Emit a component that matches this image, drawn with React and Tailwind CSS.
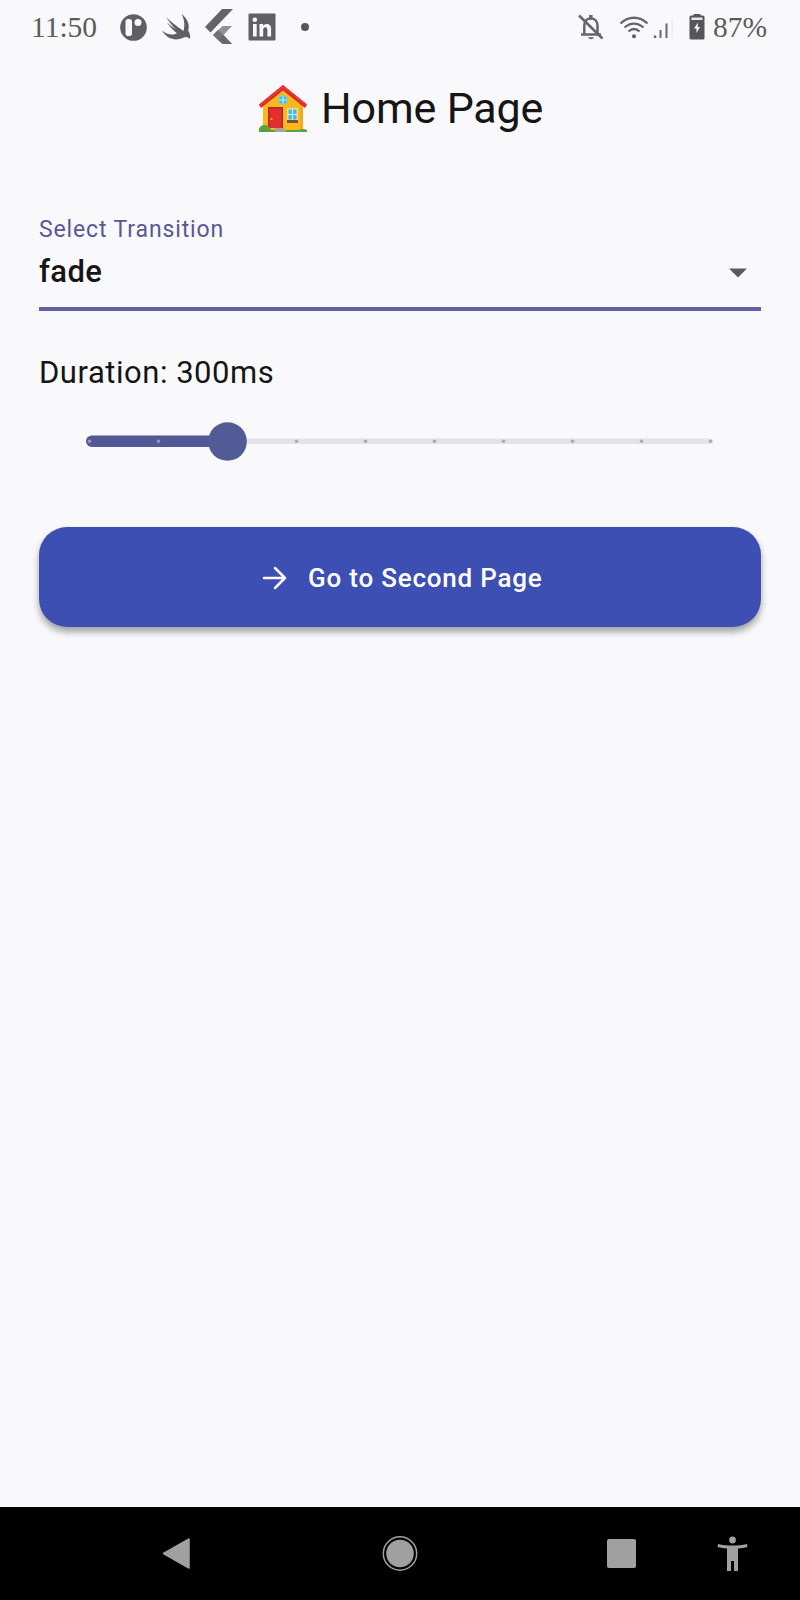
import React from "react";

function PatreonIcon() {
  return (
    <svg className="ml-[21px] h-[28px] w-[28px] shrink-0" viewBox="0 0 28 28">
      <circle cx="14.500" cy="14.500" r="13.300" fill="#606062" />
      <rect x="6.500" y="6" width="6.500" height="17" rx="2.800" fill="#f9f9fb" />
      <circle cx="19" cy="9.500" r="3.500" fill="#f9f9fb" />
    </svg>
  );
}

function SwiftIcon() {
  return (
    <svg className="ml-[14px] h-[28px] w-[32px] shrink-0" viewBox="0 0 32 28">
      <path
        fill="#606062"
        d="M20.500 1c5.500 4 8.700 10.500 6.700 16.500 2 3.500 2.500 6.500 1.500 8.500-2-2.500-4.500-2.300-7-1C14 28.500 5.500 25.500 1 17.500c5 4.500 11 5 15 2.800C11.500 17 8.500 13 6 9.500c3 2.500 6 5 9 7-4-4-7.500-8.500-10-12.500 4.500 4.500 11 9.500 17.500 14C24 12 23.500 6.500 20.500 1Z"
      />
    </svg>
  );
}

function FlutterIcon() {
  return (
    <svg className="ml-[11px] h-[36px] w-[30px] shrink-0" viewBox="0 0 30 36">
      <path d="M18 0h11L6.500 23.500 1 18Z" fill="#646466" />
      <path d="M18.500 17H28L19.500 26 28 35h-9.500L9 26Z" fill="#929294" />
      <path d="m9 26 5-5 5.500 5-5.500 5Z" fill="#737375" />
      <path d="m14 31 5.500-5L28 35h-9.500Z" fill="#69696b" />
    </svg>
  );
}

function LinkedInIcon() {
  return (
    <svg className="ml-[14px] h-[28px] w-[28px] shrink-0" viewBox="0 0 28 28">
      <rect x=".5" y=".5" width="27" height="27" rx="1" fill="#606062" />
      <circle cx="6.800" cy="6.800" r="2.300" fill="#f9f9fb" />
      <path
        fill="#f9f9fb"
        d="M5 11h3.700v12.500H5ZM11.500 11h3.600v1.800c1.800-2.800 8-3 8 3.200v7.500h-3.700v-6.800c0-3.300-4.200-3.300-4.200 0v6.800h-3.700Z"
      />
    </svg>
  );
}

function BellOffIcon() {
  return (
    <svg className="h-[28px] w-[26px] shrink-0" viewBox="0 0 26 28" fill="none" stroke="#666668" strokeWidth="2.500">
      <path d="M6.300 22V12.500C6.300 8 9 5.500 12.800 5.500s6.700 2.500 6.700 7V22M3 21.500h20" />
      <path d="M12.800 2v3" strokeWidth="3.500" />
      <path d="M10 24.300h6c-.5 2.500-5.500 2.500-6 0Z" fill="#666668" stroke="none" />
      <path d="M1 2.500 24.500 25.500" />
    </svg>
  );
}

function WifiIcon() {
  return (
    <svg className="ml-[15px] h-[24px] w-[32px] shrink-0" viewBox="0 0 32 24" fill="none" stroke="#666668" strokeWidth="2.300">
      <path d="M1.500 8.500C9.500 .8 20.500 .8 28.500 8.500M5.500 12.500c5.800-5.300 13.200-5.300 19 0M9.500 16.500c3.500-3.200 7.500-3.200 11 0" />
      <circle cx="15" cy="21.300" r="2" fill="#5b5b5d" stroke="none" />
    </svg>
  );
}

function SignalIcon() {
  return (
    <svg className="ml-[2px] h-[24px] w-[22px] shrink-0" viewBox="0 0 22 24">
      <path d="M.8 20.500h2.500V23H.8ZM6.500 15h2v8h-2ZM12.500 8.500h2V23h-2Z" fill="#6a6a6c" />
      <path d="M18.500 4h1.500v19h-1.500Z" fill="#ececef" />
    </svg>
  );
}

function BatteryIcon() {
  return (
    <svg className="ml-[14px] h-[26px] w-[16px] shrink-0" viewBox="0 0 16 26">
      <path d="M4.500 0h7v1.500H14A1.500 1.500 0 0 1 15.500 3v21A1.500 1.500 0 0 1 14 25.500H2A1.500 1.500 0 0 1 .5 24V3A1.500 1.500 0 0 1 2 1.500h2.500Z" fill="#565658" />
      <path d="M2.500 3.500h11V6h-11Z" fill="#e9e9ec" />
      <path d="M9 8.500 5 14.500h2.500V19L11 13H8.700Z" fill="#f9f9fb" />
    </svg>
  );
}

function HouseIcon() {
  return (
    <svg className="mt-[15px] h-[48px] w-[48px] shrink-0" viewBox="0 0 48 48">
      <path d="M4 20 24 3l20 17v26H4Z" fill="#f9b91c" />
      <path d="M36 14 44 20v26h-3V20Z" fill="#f4ab18" />
      <path d="M24 0 48 19.500 46 23 24 5.500 2 23 0 19.500Z" fill="#d92d2b" />
      <path d="M24 0 48 19.500 47 21 24 2.500 1 21 0 19.500Z" fill="#e63c33" />
      <circle cx="24" cy="15" r="5" fill="#8ccbb0" />
      <circle cx="24" cy="15" r="3.800" fill="#43bde8" />
      <path d="M24 11v8M20 15h8" stroke="#d7f1ee" strokeWidth="1" />
      <path d="M9 22h15v21H9Z" fill="#b9252b" />
      <path d="M10.500 23.500h12V43h-12Z" fill="#df302d" />
      <circle cx="12.500" cy="34" r="1" fill="#f8c52d" />
      <path d="M28 23h11v14H28Z" fill="#f5d98b" />
      <path d="M29.500 24.500h8v10h-8Z" fill="#43bde8" />
      <path d="M33.500 24v11M29 29.500h9" stroke="#d7f1ee" strokeWidth="1" />
      <path d="M28 35h11v3H28Z" fill="#805039" />
      <path d="M0 47v-3c1-4.500 8-6 11-1l1 2h28c3-1.500 6-1.500 8 0v2Z" fill="#5ca044" />
      <path d="M16 43h8l4 4H16Z" fill="#a8a29d" />
    </svg>
  );
}

function StatusBar() {
  return (
    <header className="flex h-[54px] items-center pl-[31px] pr-[31px] text-[#5b5b5d]">
      <span className="w-[67px] whitespace-nowrap font-['Liberation_Serif',serif] text-[29.500px] leading-[54px]">11:50</span>
      <PatreonIcon />
      <SwiftIcon />
      <FlutterIcon />
      <LinkedInIcon />
      <span className="ml-[25px] h-[8px] w-[8px] rounded-full bg-[#565658]" />
      <div className="ml-auto flex items-center">
        <BellOffIcon />
        <WifiIcon />
        <SignalIcon />
        <BatteryIcon />
        <span className="ml-[8px] w-[56px] whitespace-nowrap font-['Liberation_Serif',serif] text-[29.500px] leading-[54px]">87%</span>
      </div>
    </header>
  );
}

function DurationSlider() {
  const ticks = [0, 1, 2, 3, 4, 5, 6, 7, 8, 9];
  return (
    <svg className="mt-[26px] block h-[42px] w-full" viewBox="39 420 722 42" role="img" aria-label="Duration">
      <rect x="227" y="438.500" width="486" height="5.500" rx="2.700" fill="#e3e3e6" />
      <rect x="86" y="435.500" width="150" height="11.500" rx="5.700" fill="#515895" />
      {ticks.map((t) => (
        <circle key={t} cx={89.5 + t * 69} cy="441.300" r="1.800" fill={t < 2 ? "#9696c4" : "#aaaab0"} />
      ))}
      <circle cx="227.500" cy="441.500" r="19.300" fill="#515b96" />
    </svg>
  );
}

function NavBar() {
  return (
    <nav className="flex h-[93px] items-center bg-black">
      <svg className="ml-[162px] h-[32px] w-[28px]" viewBox="0 0 28 32">
        <path d="M27 1v29L1.500 15.500Z" fill="#a0a0a0" stroke="#a0a0a0" strokeWidth="1.500" strokeLinejoin="round" />
      </svg>
      <svg className="ml-[192px] h-[36px] w-[36px]" viewBox="0 0 36 36">
        <circle cx="18" cy="17.500" r="16.700" fill="none" stroke="#a0a0a0" strokeWidth="1.500" />
        <circle cx="18" cy="17.500" r="13.800" fill="#a0a0a0" />
      </svg>
      <div className="ml-[188.500px] h-[29px] w-[29px] rounded-[2px] bg-[#a0a0a0]" />
      <svg className="ml-[81px] h-[36px] w-[32px]" viewBox="0 0 32 36">
        <circle cx="15.500" cy="4" r="3.400" fill="#a0a0a0" />
        <path d="M1 8c9 2 20 2 29 0l.5 3c-3 .7-6.500 1.300-9.500 1.500V35h-4V25h-3v10h-4V12.500C7 12.200 3.500 11.700.5 11Z" fill="#a0a0a0" />
      </svg>
    </nav>
  );
}

export default function App() {
  return (
    <div className="flex h-[1600px] w-[800px] flex-col overflow-hidden bg-[#f9f9fb] font-['Roboto',sans-serif] text-[#151517]">
      <StatusBar />
      <div className="flex h-[108px] items-start pl-[259px] pt-4">
        <HouseIcon />
        <h1 className="ml-[14px] whitespace-nowrap text-[43px] leading-[76px] tracking-[-0.15px]">Home Page</h1>
      </div>
      <main className="flex flex-1 flex-col px-[39px] pt-[52px]">
        <label className="h-[32px] whitespace-nowrap text-[23px] leading-[32px] tracking-[0.87px] text-[#595797]">Select Transition</label>
        <div className="flex h-[65px] items-start justify-between border-b-4 border-[#6260a0] pr-[13px]">
          <span className="text-[31px] font-medium leading-[52px] tracking-[0.4px]">fade</span>
          <svg className="mt-[22px] h-[11px] w-[20px]" viewBox="0 0 20 11">
            <path d="M1 .5h18l-9 9Z" fill="#5b5b5d" />
          </svg>
        </div>
        <p className="mt-[41px] h-[42px] whitespace-nowrap text-[31px] leading-[42px] tracking-[0.53px]">Duration: 300ms</p>
        <DurationSlider />
        <button className="mt-[65px] flex h-[100px] w-full shrink-0 items-center rounded-[28px] bg-[#3e4fb3] pl-[222px] pt-[2px] text-white shadow-[0_5px_7px_rgba(0,0,0,0.35)]">
          <svg className="h-[26px] w-[26px]" viewBox="0 0 26 26" fill="none" stroke="#f8faff" strokeWidth="2.500" strokeLinecap="round" strokeLinejoin="round">
            <path d="M3 13h21M14 3l10 10-10 10" />
          </svg>
          <span className="ml-[21px] whitespace-nowrap text-[26px] font-medium leading-[36px] tracking-[0.78px]">Go to Second Page</span>
        </button>
      </main>
      <NavBar />
    </div>
  );
}
